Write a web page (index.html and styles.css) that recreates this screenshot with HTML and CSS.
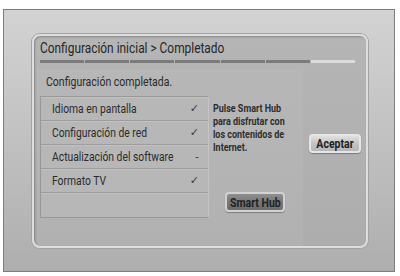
FILE: index.html
```html
<!DOCTYPE html>
<html lang="es">
<head>
    <meta charset="UTF-8">
    <meta name="viewport" content="width=device-width, initial-scale=1.0">
    <title>Configuración inicial</title>
    <link rel="stylesheet" href="styles.css">
</head>
<body>
    <div class="screen">
        <section class="panel">
            <h1 class="title"><span class="cond">Configuración inicial &gt; Completado</span></h1>
            <div class="steps">
                <span></span><span></span><span></span><span></span><span></span><span></span><span class="todo"></span>
            </div>
            <div class="content">
                <div class="main">
                    <p class="status"><span class="cond">Configuración completada.</span></p>
                    <div class="body">
                        <ul class="checklist">
                            <li><span class="cond">Idioma en pantalla</span><span class="mark">&#10003;</span></li>
                            <li><span class="cond">Configuración de red</span><span class="mark">&#10003;</span></li>
                            <li><span class="cond">Actualización del software</span><span class="mark">-</span></li>
                            <li><span class="cond">Formato TV</span><span class="mark">&#10003;</span></li>
                            <li></li>
                        </ul>
                        <div class="info">
                            <p>Pulse Smart Hub para disfrutar con los contenidos de Internet.</p>
                            <button class="btn btn-dark"><span class="cond">Smart Hub</span></button>
                        </div>
                    </div>
                </div>
                <div class="side">
                    <button class="btn"><span class="cond">Aceptar</span></button>
                </div>
            </div>
        </section>
    </div>
</body>
</html>
```

FILE: styles.css
```css
body {
  margin: 0;
  background-color: #fff;
  font-family: Roboto, "Liberation Sans", Arial, sans-serif;
  color: #2b2b2b;
}

/* the TV font is a condensed grotesque, squeeze Roboto to match */
.cond {
  display: inline-block;
  transform: scaleX(0.81);
  transform-origin: 0 50%;
}

.screen {
  box-sizing: border-box;
  width: 392px;
  height: 263px;
  margin: 9px 0 0 3px;
  border: 1px solid #7d7d7d;
  background: linear-gradient(#d3d3d3, #bdbdbd 60%, #aeaeae);
  padding: 24px 0 0 28px;
}

.panel {
  box-sizing: border-box;
  width: 336px;
  height: 214px;
  border: 2px solid #dedede;
  border-radius: 8px;
  background: linear-gradient(#b5b5b5, #adadad);
  box-shadow: 0 0 0 1px #a2a2a2, inset 1px 1px 2px rgba(0, 0, 0, 0.25);
  padding: 4px 0 0 6px;
  display: flex;
  flex-direction: column;
}

.title {
  margin: 0;
  font-size: 14px;
  font-weight: normal;
  line-height: 16px;
  color: #262626;
  white-space: nowrap;
}

.title .cond {
  transform: scaleX(0.85);
}

.steps {
  display: flex;
  gap: 1px;
  width: 315px;
  height: 3px;
  margin-top: 4px;
}

.steps span {
  flex: 1;
  background-color: #7b7b7b;
}

.steps .todo {
  background-color: #dcdcdc;
}

.content {
  flex: 1;
  display: flex;
  margin: 6px 0 0 -3px;
}

.main {
  width: 263px;
  background-color: rgba(255, 255, 255, 0.05);
  padding: 5px 0 0 3px;
}

.status {
  margin: 0 0 6px 6px;
  font-size: 13px;
  line-height: 16px;
  white-space: nowrap;
}

.body {
  display: flex;
  gap: 4px;
}

.checklist {
  list-style: none;
  margin: 0;
  padding: 0;
  width: 167px;
  border: 1px solid #989898;
  border-right-color: #c4c4c4;
  background-color: #b7b7b7;
}

.checklist li {
  box-sizing: border-box;
  height: 24px;
  display: flex;
  align-items: center;
  justify-content: space-between;
  padding: 0 9px 0 11px;
  font-size: 12px;
  white-space: nowrap;
  border-bottom: 1px solid #9d9d9d;
  box-shadow: inset 0 1px 0 #c2c2c2;
}

.checklist li .cond {
  transform: scaleX(0.86);
}

.checklist li:last-child {
  border-bottom: none;
}

.mark {
  font-family: "DejaVu Sans", sans-serif;
  font-size: 11px;
  color: #3a3a3a;
}

.info {
  width: 88px;
  padding-top: 6px;
}

.info p {
  margin: 0;
  width: 108px;
  font-size: 11.5px;
  font-weight: bold;
  line-height: 13px;
  color: #2e2e2e;
  transform: scaleX(0.78);
  transform-origin: 0 0;
}

.btn {
  display: flex;
  justify-content: center;
  align-items: center;
  font-family: inherit;
  font-size: 13px;
  font-weight: bold;
  white-space: nowrap;
  color: #222;
  border: 2px solid #e6e6e6;
  border-radius: 4px;
  padding: 0;
  background: linear-gradient(#e0e0e0, #c4c4c4 50%, #b6b6b6);
  box-shadow: 0 1px 1px rgba(0, 0, 0, 0.3);
}

.btn .cond {
  transform-origin: 50% 50%;
}

.btn-dark {
  width: 60px;
  height: 20px;
  margin: 38px 0 0 12px;
  background: linear-gradient(#8f8f8f, #777 50%, #6c6c6c);
  border-color: #d2d2d2;
}

.side {
  flex: 1;
  display: flex;
  justify-content: center;
  align-items: flex-start;
}

.side .btn {
  width: 52px;
  height: 19px;
  margin-top: 65px;
}
```
